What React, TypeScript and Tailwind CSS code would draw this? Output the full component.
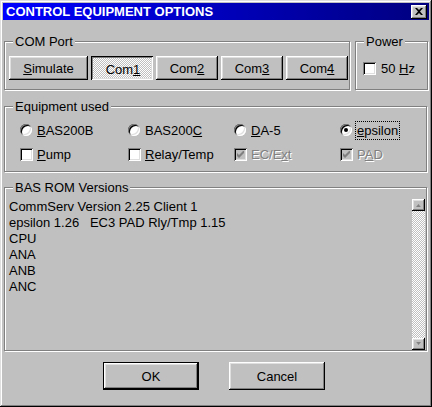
import type { ReactNode } from 'react';

// win95 bevels
const raised = 'shadow-[inset_-1px_-1px_#000,inset_1px_1px_#fff,inset_-2px_-2px_#808080,inset_2px_2px_#dfdfdf]';
const pressed = 'shadow-[inset_1px_1px_#000,inset_-1px_-1px_#fff,inset_2px_2px_#808080,inset_-2px_-2px_#dfdfdf]';
const defaultBtn = 'shadow-[inset_0_0_0_1px_#000,inset_-2px_-2px_#000,inset_2px_2px_#fff,inset_-3px_-3px_#808080,inset_3px_3px_#dfdfdf]';
const sunken = 'shadow-[inset_1px_1px_#808080,inset_-1px_-1px_#fff,inset_2px_2px_#000,inset_-2px_-2px_#dfdfdf]';
const dither = 'bg-[repeating-conic-gradient(#fff_0%_25%,#c0c0c0_0%_50%)] bg-[length:2px_2px]';
const disabledText = 'text-[#808080] [text-shadow:1px_1px_0_#fff]';

function U({ children }: { children: ReactNode }) {
  return <span className="underline">{children}</span>;
}

function Group({ label, className = '', children }: { label: string; className?: string; children: ReactNode }) {
  return (
    <fieldset className={`min-w-0 border border-[#808080] shadow-[inset_1px_1px_#fff,1px_1px_#fff] ${className}`}>
      <legend className="ml-[8px] bg-[#c0c0c0] px-[2px]">{label}</legend>
      {children}
    </fieldset>
  );
}

function CheckBox({ checked = false, disabled = false }: { checked?: boolean; disabled?: boolean }) {
  return (
    <span className={`flex h-[13px] w-[13px] shrink-0 items-center justify-center ${disabled ? 'bg-[#c0c0c0]' : 'bg-white'} ${sunken}`}>
      {checked && (
        <svg width="7" height="7" viewBox="0 0 7 7">
          <path d="M0 2L2 4L7 -1V2L2 7L0 5Z" fill={disabled ? '#808080' : '#000'} />
        </svg>
      )}
    </span>
  );
}

function Radio({ checked = false }: { checked?: boolean }) {
  return (
    <span className={`flex h-[12px] w-[12px] shrink-0 items-center justify-center rounded-full bg-white ${sunken}`}>
      {checked && <span className="h-[4px] w-[4px] rounded-full bg-black" />}
    </span>
  );
}

function ScrollBtn({ up }: { up?: boolean }) {
  return (
    <div className={`flex h-[12px] items-center justify-center bg-[#c0c0c0] ${raised}`}>
      <svg width="7" height="4" viewBox="0 0 7 4" className={up ? '' : 'rotate-180'}>
        <path d="M1 4.5L3.5 1.5L6 4.5Z" fill="#fff" transform="translate(0.6 0.4)" />
        <path d="M1 4L3.5 1L6 4Z" fill="#808080" />
      </svg>
    </div>
  );
}

export default function App() {
  return (
    <div
      className={`flex h-[407px] w-[432px] flex-col bg-[#c0c0c0] p-[3px] font-['Liberation_Sans',Arial,sans-serif] text-[13px] leading-[15px] text-black shadow-[inset_-1px_-1px_#000,inset_1px_1px_#dfdfdf,inset_-2px_-2px_#808080,inset_2px_2px_#fff]`}
    >
      {/* title bar */}
      <div className="flex h-[17px] items-center justify-between bg-linear-to-r from-[#0000ff] to-[#000080] pl-[3px] pr-[2px]">
        <span className="font-bold text-white">CONTROL EQUIPMENT OPTIONS</span>
        <button className={`flex h-[14px] w-[16px] items-center justify-center bg-[#c0c0c0] ${raised}`}>
          <svg width="8" height="7" viewBox="0 0 8 7" className="mb-px">
            <path d="M0 0h2l2 2 2-2h2L5 3.5 8 7H6L4 5 2 7H0l3-3.5z" fill="#000" />
          </svg>
        </button>
      </div>

      <div className="ml-[1px] mt-[14px] flex gap-[5px]">
        <Group label="COM Port" className="w-[346px]">
          <div className="flex gap-[3px] pb-[9px] pl-[4px] pt-[7px]">
            <button className={`h-[24px] w-[79px] ${raised}`}>
              <U>S</U>imulate
            </button>
            <button className={`h-[24px] w-[62px] ${dither} ${pressed}`}>
              <span className="inline-block translate-x-px translate-y-px">
                Com<U>1</U>
              </span>
            </button>
            <button className={`h-[24px] w-[62px] ${raised}`}>
              Com<U>2</U>
            </button>
            <button className={`h-[24px] w-[62px] ${raised}`}>
              Com<U>3</U>
            </button>
            <button className={`h-[24px] w-[62px] ${raised}`}>
              Com<U>4</U>
            </button>
          </div>
        </Group>
        <Group label="Power" className="w-[73px]">
          <div className="flex h-[24px] items-center gap-[5px] pl-[7px] mt-[7px]">
            <CheckBox />
            <span>
              50 <U>H</U>z
            </span>
          </div>
        </Group>
      </div>

      <Group label="Equipment used" className="ml-[1px] mt-[9px] w-[423px]">
        <div className="grid grid-cols-[108px_106px_106px_1fr] grid-rows-[16px_16px] gap-y-[8px] pb-[9px] pl-[15px] pt-[8px]">
          <div className="flex items-center gap-[5px]">
            <Radio />
            <span>
              <U>B</U>AS200B
            </span>
          </div>
          <div className="flex items-center gap-[5px]">
            <Radio />
            <span>
              BAS200<U>C</U>
            </span>
          </div>
          <div className="flex items-center gap-[5px]">
            <Radio />
            <span>
              <U>D</U>A-5
            </span>
          </div>
          <div className="flex items-center gap-[5px]">
            <Radio checked />
            <span className="outline-1 outline-offset-1 outline-dotted outline-black">
              <U>e</U>psilon
            </span>
          </div>
          <div className="flex items-center gap-[4px]">
            <CheckBox />
            <span>
              <U>P</U>ump
            </span>
          </div>
          <div className="flex items-center gap-[4px]">
            <CheckBox />
            <span>
              <U>R</U>elay/Temp
            </span>
          </div>
          <div className="flex items-center gap-[4px]">
            <CheckBox checked disabled />
            <span className={disabledText}>
              EC/E<U>x</U>t
            </span>
          </div>
          <div className="flex items-center gap-[4px]">
            <CheckBox checked disabled />
            <span className={disabledText}>
              P<U>A</U>D
            </span>
          </div>
        </div>
      </Group>

      <Group label="BAS ROM Versions" className="ml-[1px] mt-[8px] w-[423px]">
        <div className="flex h-[155px] pl-[4px] pr-[1px] pt-[4px]">
          <div className="flex-1 whitespace-pre leading-[16px]">
            <div>CommServ Version 2.25 Client 1</div>
            <div>epsilon 1.26   EC3 PAD Rly/Tmp 1.15</div>
            <div>CPU</div>
            <div>ANA</div>
            <div>ANB</div>
            <div>ANC</div>
          </div>
          <div className="flex w-[13px] flex-col">
            <ScrollBtn up />
            <div className={`flex-1 ${dither}`} />
            <ScrollBtn />
          </div>
        </div>
      </Group>

      <div className="mt-[11px] flex justify-center gap-[30px] pr-[4px]">
        <button className={`h-[28px] w-[96px] ${defaultBtn}`}>OK</button>
        <button className={`h-[28px] w-[96px] ${raised}`}>Cancel</button>
      </div>
    </div>
  );
}
